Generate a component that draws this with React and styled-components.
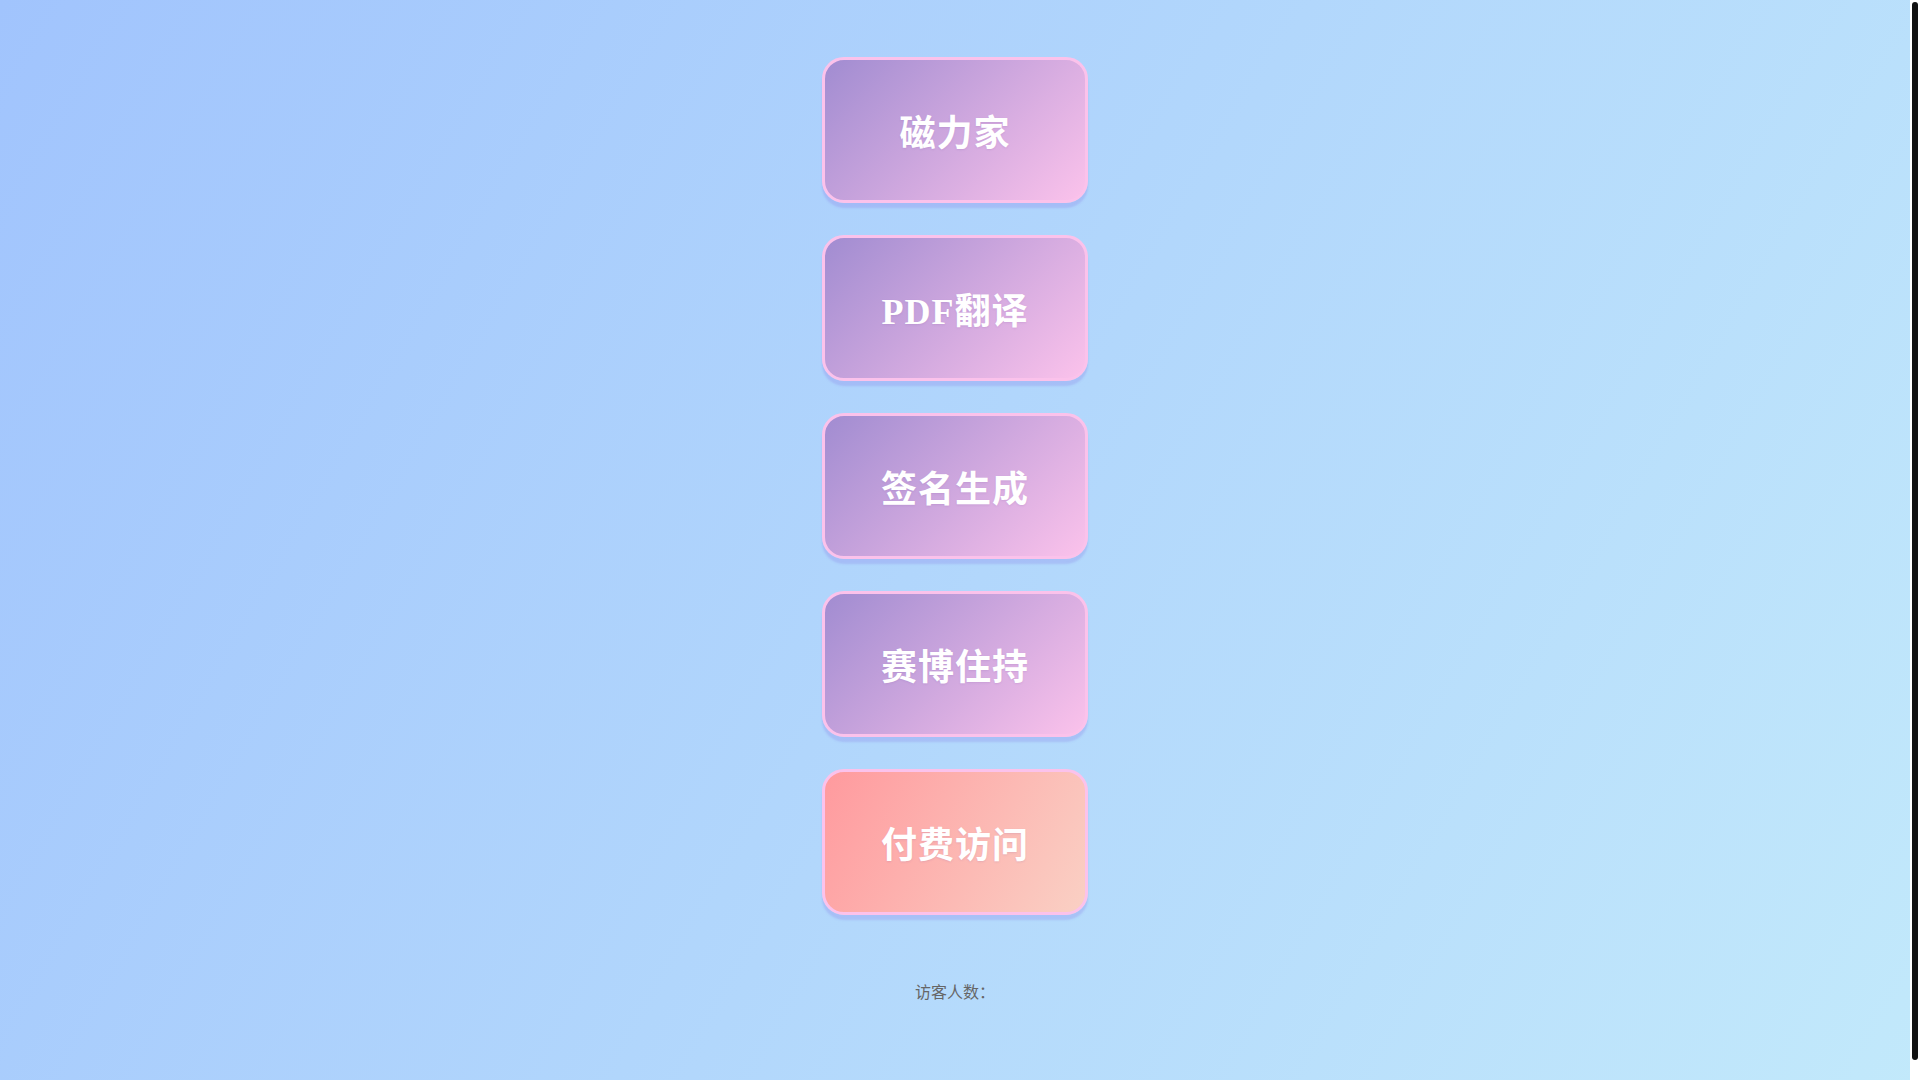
import React from 'react'
import styled, { createGlobalStyle } from 'styled-components'

const GlobalStyle = createGlobalStyle`
  html {
    background: #fff;
  }
  body {
    margin: 0;
    font-family: "Liberation Serif", "Noto Sans CJK SC", serif;
    background: linear-gradient(120deg, #a1c4fd 0%, #c2e9fb 100%);
  }
  ::-webkit-scrollbar {
    width: 0;
  }
`

// the page scrollbar as it shows in the screenshot
const ScrollTrack = styled.div`
  position: fixed;
  top: 0;
  right: 0;
  bottom: 0;
  width: 10px;
  padding: 2px 2px 20px;
  box-sizing: border-box;
  background: #fff;
`

const ScrollThumb = styled.div`
  height: 100%;
  border-radius: 3px;
  background: #111;
`

const Page = styled.div`
  display: flex;
  flex-direction: column;
  align-items: center;
  padding: 57px 10px 95px 0;
`

const Menu = styled.nav`
  display: flex;
  flex-direction: column;
  align-items: center;
  gap: 32px;
`

const Card = styled.a`
  box-sizing: border-box;
  width: 266px;
  height: 146px;
  display: flex;
  align-items: center;
  justify-content: center;
  border: 3px solid #fbc2eb;
  border-radius: 22px;
  background: ${p => p.$paid
    ? 'linear-gradient(120deg, #ff9a9e 0%, #fad0c4 100%)'
    : 'linear-gradient(135deg, #a18cd1 0%, #fbc2eb 100%)'};
  box-shadow: 0 5px 2px rgba(130, 120, 230, 0.25);
  color: #fff;
  font-size: 36px;
  font-weight: 700;
  letter-spacing: 1px;
  text-decoration: none;
  text-shadow: 0 1px 2px rgba(120, 80, 160, 0.15);
  cursor: pointer;
`

const Visitors = styled.p`
  margin: 64px 0 0;
  font-family: "Noto Sans CJK SC", sans-serif;
  font-size: 16px;
  line-height: 24px;
  color: #666;
`

const links = ['磁力家', 'PDF翻译', '签名生成', '赛博住持']

export default function App() {
  return (
    <>
      <GlobalStyle />
      <Page>
        <Menu>
          {links.map(name => (
            <Card key={name}>{name}</Card>
          ))}
          <Card $paid>付费访问</Card>
        </Menu>
        <Visitors>访客人数：<span></span></Visitors>
      </Page>
      <ScrollTrack>
        <ScrollThumb />
      </ScrollTrack>
    </>
  )
}
